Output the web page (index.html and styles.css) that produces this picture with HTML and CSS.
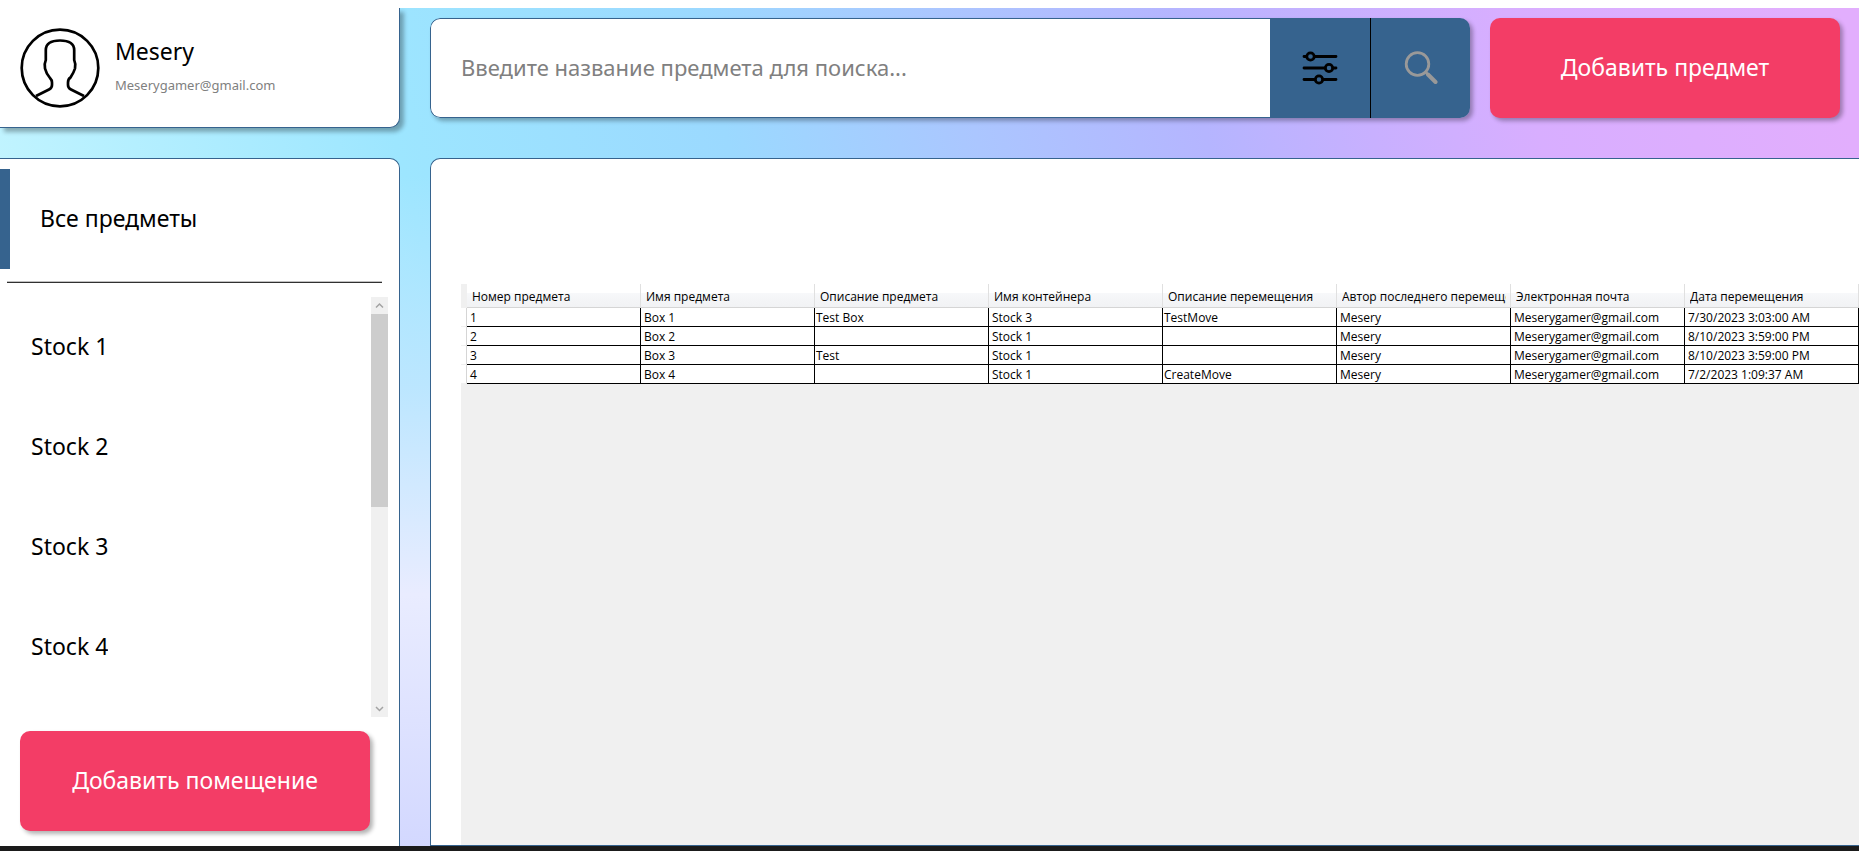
FILE: index.html
```html
<!DOCTYPE html>
<html lang="ru">
<head>
<meta charset="utf-8">
<title>Склад</title>
<link rel="stylesheet" href="styles.css">
</head>
<body>
<div class="app">
  <aside class="side">
    <section class="profile">
      <svg class="avatar" viewBox="0 0 80 80" aria-hidden="true">
        <circle cx="40" cy="40" r="38.3"/>
        <path d="M16 68 L29 61.500 Q32 60 32 57 V54.500 Q32 52 30 50 Q26 45 25 40.500 Q24 36 25.800 32 V22 Q26 12.500 40 12.500 Q54 12.500 54.200 22 V32 Q56 36 55 40.500 Q54 44 50.500 49.500 Q48 51 48 54.500 V57 Q48 60 51 61.500 L64 68"/>
      </svg>
      <div class="profile-text">
        <span class="profile-name">Mesery</span>
        <span class="profile-mail">Meserygamer@gmail.com</span>
      </div>
    </section>
    <nav class="rooms">
      <a class="rooms-all" href="#">Все предметы</a>
      <hr class="rooms-line">
      <div class="rooms-body">
        <ul class="rooms-list">
          <li><a href="#">Stock 1</a></li>
          <li><a href="#">Stock 2</a></li>
          <li><a href="#">Stock 3</a></li>
          <li><a href="#">Stock 4</a></li>
        </ul>
        <div class="scroll" aria-hidden="true">
          <svg viewBox="0 0 17 17"><path d="M5 10.500 L8.500 7 L12 10.500"/></svg>
          <div class="scroll-track"><div class="scroll-thumb"></div></div>
          <svg viewBox="0 0 17 17"><path d="M5 7 L8.500 10.500 L12 7"/></svg>
        </div>
      </div>
      <button class="add" type="button">Добавить помещение</button>
    </nav>
  </aside>
  <main class="main">
    <header class="top">
      <form class="search">
        <input class="search-input" type="text" aria-label="Поиск предмета" placeholder="Введите название предмета для поиска...">
        <button class="search-btn" type="button" aria-label="Фильтр">
          <svg class="icon-filter" viewBox="0 0 36 34" aria-hidden="true">
            <path d="M2 5.500H4.500 M12.500 5.500H34 M2 17H23 M31 17H34 M2 28.500H13 M21 28.500H34"/>
            <circle cx="8.500" cy="5.500" r="3.700"/><circle cx="27" cy="17" r="3.700"/><circle cx="17" cy="28.500" r="3.700"/>
          </svg>
        </button>
        <button class="search-btn" type="button" aria-label="Найти">
          <svg class="icon-find" viewBox="0 0 34 34" aria-hidden="true">
            <circle cx="13.500" cy="13" r="11.300"/>
            <path d="M21.500 21 L24 23.500"/>
            <path class="handle" d="M24 23.500 L31.500 31"/>
          </svg>
        </button>
      </form>
      <button class="add" type="button">Добавить предмет</button>
    </header>
    <section class="items">
      <div class="grid">
        <table>
          <thead>
            <tr><th class="rowhead"></th><th><span>Номер предмета</span></th><th><span>Имя предмета</span></th><th><span>Описание предмета</span></th><th><span>Имя контейнера</span></th><th><span>Описание перемещения</span></th><th><span>Автор последнего перемещения</span></th><th><span>Электронная почта</span></th><th><span>Дата перемещения</span></th></tr>
          </thead>
          <tbody>
            <tr><td class="rowhead"></td><td>1</td><td>Box 1</td><td class="note">Test Box</td><td>Stock 3</td><td class="note">TestMove</td><td>Mesery</td><td>Meserygamer@gmail.com</td><td>7/30/2023 3:03:00 AM</td></tr>
            <tr><td class="rowhead"></td><td>2</td><td>Box 2</td><td class="note"></td><td>Stock 1</td><td class="note"></td><td>Mesery</td><td>Meserygamer@gmail.com</td><td>8/10/2023 3:59:00 PM</td></tr>
            <tr><td class="rowhead"></td><td>3</td><td>Box 3</td><td class="note">Test</td><td>Stock 1</td><td class="note"></td><td>Mesery</td><td>Meserygamer@gmail.com</td><td>8/10/2023 3:59:00 PM</td></tr>
            <tr><td class="rowhead"></td><td>4</td><td>Box 4</td><td class="note"></td><td>Stock 1</td><td class="note">CreateMove</td><td>Mesery</td><td>Meserygamer@gmail.com</td><td>7/2/2023 1:09:37 AM</td></tr>
          </tbody>
        </table>
      </div>
    </section>
  </main>
</div>
<footer class="taskbar"></footer>
</body>
</html>
```
FILE: styles.css
```css
* { box-sizing: border-box; }

body {
  margin: 0;
  height: 100vh;
  display: flex;
  flex-direction: column;
  border-top: 8px solid #fff;
  font-family: "Noto Sans", "Open Sans", sans-serif;
  font-size: 23px;
  line-height: 32px;
  color: #000;
}

.app {
  flex: 1;
  min-height: 0;
  display: flex;
  gap: 30px;
  background:
    linear-gradient(180deg, rgba(190, 230, 255, 0) 20%, rgba(190, 230, 255, 0.9) 45%, #e9ecff 70%, #d3d8ff 100%),
    linear-gradient(75deg, #c4f5ff 7%, #9de6ff 28%, #9bd9ff 44%, #abc6ff 56%, #b5b5ff 67%, #c8b0ff 75%, #d8aeff 83%, #e2aefd 98%);
}

.side {
  flex: none;
  width: 400px;
  display: flex;
  flex-direction: column;
  gap: 30px;
}

.profile {
  height: 120px;
  display: flex;
  align-items: center;
  gap: 15px;
  padding: 0 20px;
  background: #fff;
  border: solid #36638e;
  border-width: 0 1px 1px 0;
  border-radius: 0 0 10px 0;
  box-shadow: 4px 4px 4px rgba(0, 0, 0, 0.3);
}

.avatar {
  width: 80px;
  height: 80px;
  fill: none;
  stroke: #000;
  stroke-width: 2.7;
}

.profile-text { display: flex; flex-direction: column; gap: 2px; }
.profile-mail { font-size: 13px; color: #808080; }

.rooms {
  flex: 1;
  min-height: 0;
  display: flex;
  flex-direction: column;
  padding-top: 10px;
  background: #fff;
  border: solid #36638e;
  border-width: 1px 1px 0 0;
  border-radius: 0 10px 0 0;
}

.rooms a {
  height: 100px;
  display: flex;
  align-items: center;
  padding-bottom: 2px;
  color: #000;
  text-decoration: none;
}

.rooms .rooms-all {
  padding-left: 40px;
  background: linear-gradient(90deg, #36638e 10px, #fff 10px);
}

.rooms-line {
  width: 375px;
  height: 2px;
  margin: 12px 7px 14px;
  border: 0;
  border-top: 1px solid #c0c0c0;
  border-bottom: 1px solid #303030;
}

.rooms-body {
  flex: 1;
  min-height: 0;
  display: flex;
  justify-content: space-between;
  padding-right: 11px;
}

.rooms-list { margin: 0; padding: 0 0 0 31px; list-style: none; overflow: hidden; }

.scroll {
  width: 17px;
  display: flex;
  flex-direction: column;
  background: #f0f0f0;
}
.scroll svg { width: 17px; height: 17px; fill: none; stroke: #a3a3a3; stroke-width: 1.5; }
.scroll-track { flex: 1; }
.scroll-thumb { height: 50%; background: #cdcdcd; }

.add {
  flex: none;
  width: 350px;
  height: 100px;
  padding: 0 0 2px;
  border: 0;
  border-radius: 10px;
  background: #f33d66;
  box-shadow: 3px 3px 4px rgba(0, 0, 0, 0.3);
  font: inherit;
  color: #fff;
}
.rooms .add { margin: 14px 20px 15px; }

.main {
  flex: 1;
  min-width: 0;
  display: flex;
  flex-direction: column;
  gap: 40px;
}

.top {
  display: flex;
  gap: 20px;
  padding: 10px 19px 0 0;
}

.search {
  flex: 1;
  min-width: 0;
  height: 100px;
  display: flex;
  border-radius: 10px;
  overflow: hidden;
  box-shadow: 3px 3px 4px rgba(0, 0, 0, 0.3);
}

.search-input {
  flex: 1;
  min-width: 0;
  padding: 0 30px 2px;
  border: 1px solid #36638e;
  border-right: 0;
  border-radius: 10px 0 0 10px;
  background: #fff;
  font: inherit;
  font-size: 22px;
  outline: 0;
}
.search-input::placeholder { color: #808080; opacity: 1; }

.search-btn {
  width: 100px;
  display: flex;
  align-items: center;
  justify-content: center;
  padding: 0;
  border: 0;
  background: #36638e;
}
.search-btn + .search-btn { border-left: 1px solid #000; }
.search-btn svg { fill: none; stroke-linecap: round; }
.icon-filter { width: 36px; height: 34px; stroke: #000; stroke-width: 2.8; }
.icon-find { width: 34px; height: 34px; stroke: #999; stroke-width: 2.8; }
.icon-find .handle { stroke-width: 4; }

.items {
  flex: 1;
  min-height: 0;
  display: flex;
  padding: 125px 0 0 30px;
  background: #fff;
  border: solid #36638e;
  border-width: 1px 0 1px 1px;
  border-radius: 10px 0 0 0;
}

.grid { flex: 1; min-width: 0; background: #f0f0f0; }

table {
  width: 100%;
  table-layout: fixed;
  border-collapse: separate;
  border-spacing: 0;
  font-family: "Open Sans", "Noto Sans", sans-serif;
  font-size: 12px;
  line-height: 16px;
}

th, td {
  padding: 2px 3px 0;
  text-align: left;
  font-weight: 400;
  white-space: nowrap;
  overflow: hidden;
}

th {
  height: 24px;
  padding: 2px 4px 0 5px;
  background: linear-gradient(#fff 40%, #f7f8fa 40%, #f1f2f4);
  border-right: 1px solid #e0e0e0;
  border-bottom: 1px solid #d5d5d5;
}
th span { display: block; overflow: hidden; }

td {
  height: 19px;
  background: #fff;
  border-right: 1px solid #000;
  border-bottom: 1px solid #000;
}

td.note { padding: 2px 1px 0; }

.rowhead { width: 6px; padding: 0; }
th.rowhead { background: #f0f0f0; border-color: #f0f0f0; }
td.rowhead { border-color: #f0f0f0; border-right-color: #d5d5d5; }

.taskbar { height: 5px; background: #1b1b1b; }
```
